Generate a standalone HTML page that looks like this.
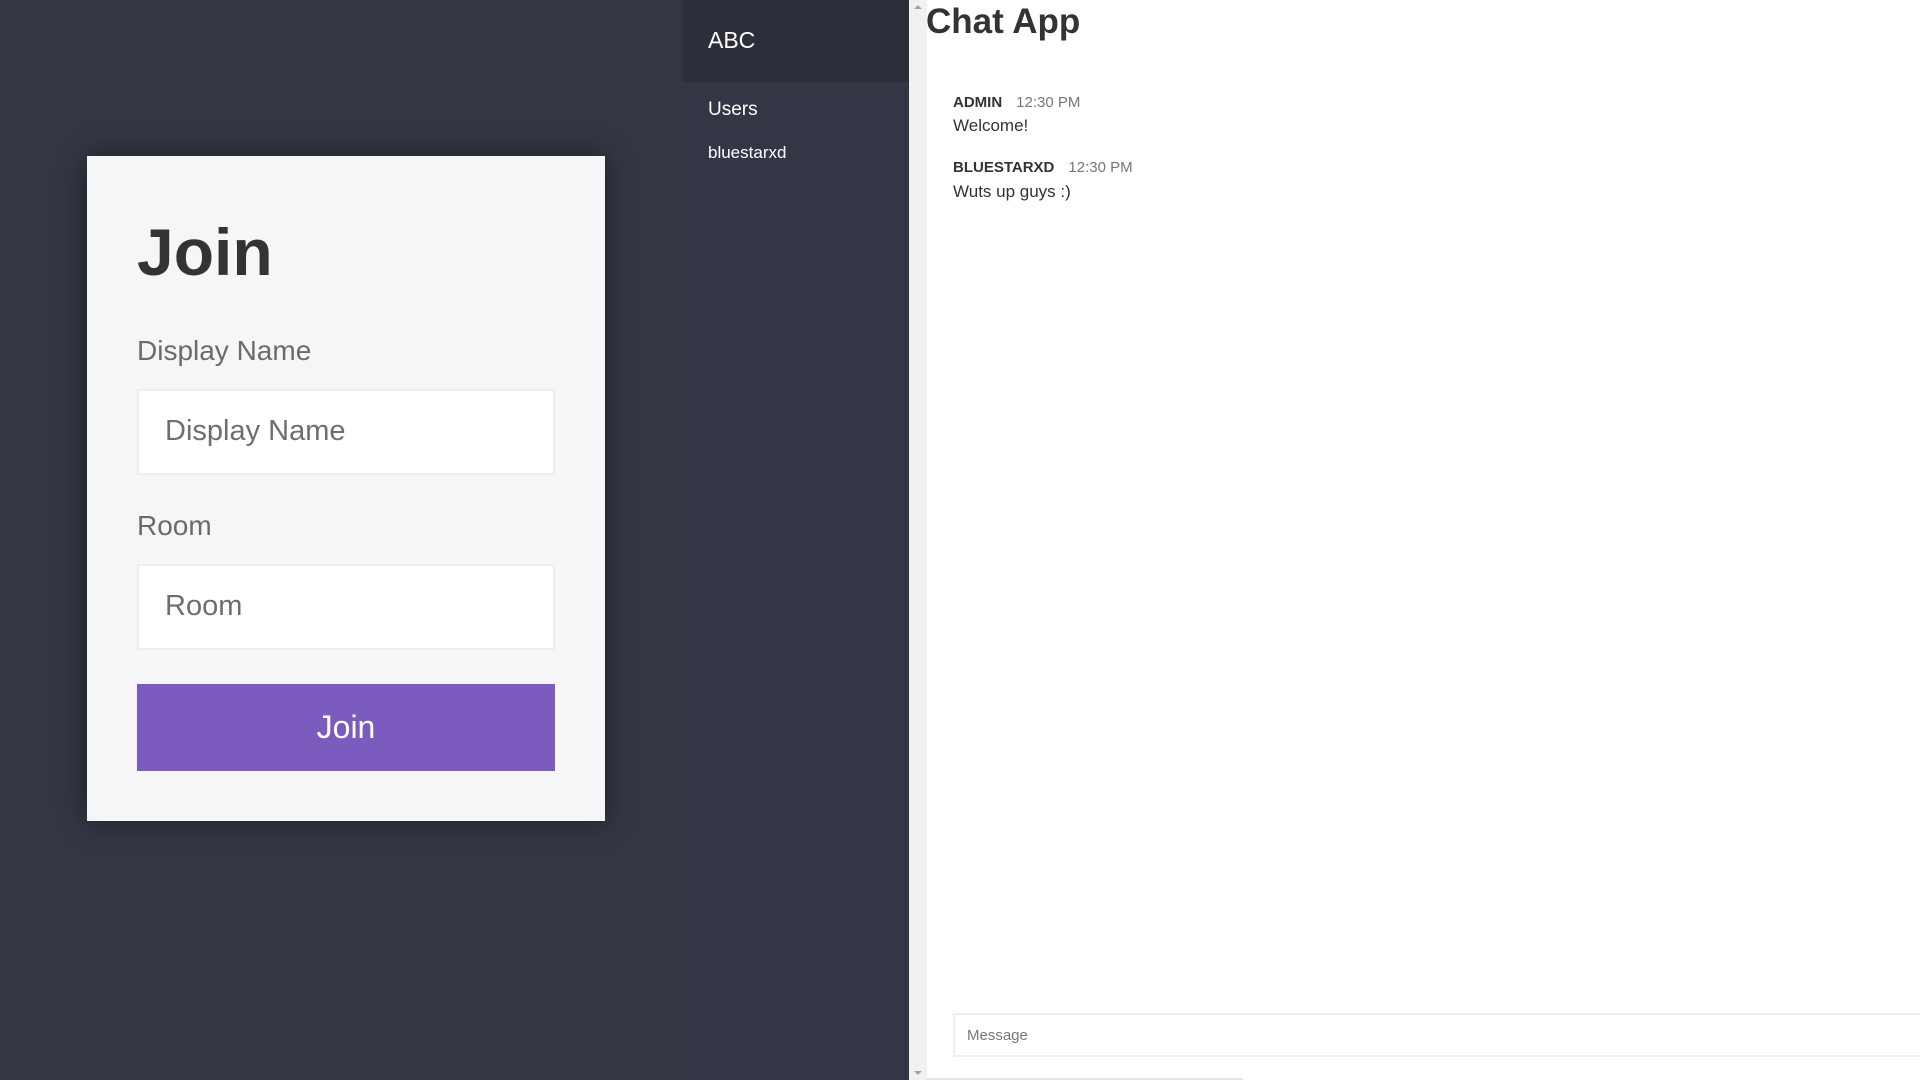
<!DOCTYPE html>
<html><head><meta charset="utf-8"><style>
*{margin:0;padding:0;box-sizing:border-box}
body{width:1920px;height:1080px;overflow:hidden;background:#333744;font-family:"Liberation Sans",Arial,sans-serif;position:relative}
.a{position:absolute;white-space:nowrap}
.card{left:87px;top:156px;width:518px;height:665px;background:#f6f6f8;box-shadow:0 0 28px rgba(0,0,0,.45)}
.inp{background:#fff;border:2px solid #ededed;left:137px;width:418px;height:86px;color:#6e6e6e;font-size:29px;padding:0 0 0 26px;line-height:80px}
.lbl{left:137px;color:#6b6b6b;font-size:28px}
</style></head><body>
<div class="a card"></div>
<div class="a" style="left:137px;top:214px;font-size:66px;font-weight:bold;color:#333">Join</div>
<div class="a lbl" style="top:335px">Display Name</div>
<div class="a inp" style="top:389px">Display Name</div>
<div class="a lbl" style="top:510px">Room</div>
<div class="a inp" style="top:564px">Room</div>
<div class="a" style="left:137px;top:684px;width:418px;height:87px;background:#7b5bbd;color:#fff;font-size:32px;text-align:center;line-height:87px">Join</div>

<div class="a" style="left:682px;top:0;width:227px;height:1080px;background:#333645"></div>
<div class="a" style="left:682px;top:0;width:227px;height:82px;background:#2c2e3a"></div>
<div class="a" style="left:708px;top:27px;font-size:23px;color:#fff">ABC</div>
<div class="a" style="left:708px;top:99px;font-size:19px;color:#fff">Users</div>
<div class="a" style="left:708px;top:143px;font-size:17px;color:#fff">bluestarxd</div>

<div class="a" style="left:909px;top:0;width:1011px;height:1080px;background:#fff"></div>
<div class="a" style="left:909px;top:0;width:18px;height:1080px;background:#f1f1f1"></div>
<div class="a" style="left:914px;top:5px;width:0;height:0;border-left:4px solid transparent;border-right:4px solid transparent;border-bottom:4px solid #a3a3a3"></div>
<div class="a" style="left:914px;top:1071px;width:0;height:0;border-left:4px solid transparent;border-right:4px solid transparent;border-top:4px solid #a3a3a3"></div>
<div class="a" style="left:927px;top:1078px;width:316px;height:2px;background:#e4e4e4"></div>
<div class="a" style="left:926px;top:2px;font-size:35px;font-weight:bold;color:#333">Chat App</div>
<div class="a" style="left:953px;top:94px;font-size:15px;color:#333"><b>ADMIN</b><span style="color:#777;margin-left:14px">12:30 PM</span></div>
<div class="a" style="left:953px;top:116px;font-size:17px;color:#333">Welcome!</div>
<div class="a" style="left:953px;top:159px;font-size:15px;color:#333"><b>BLUESTARXD</b><span style="color:#777;margin-left:14px">12:30 PM</span></div>
<div class="a" style="left:953px;top:182px;font-size:17px;color:#333">Wuts up guys :)</div>
<div class="a" style="left:953px;top:1013px;width:980px;height:44px;border:2px solid #eee;background:#fff;font-size:15px;color:#777;padding-left:12px;line-height:42px">Message</div>
</body></html>
